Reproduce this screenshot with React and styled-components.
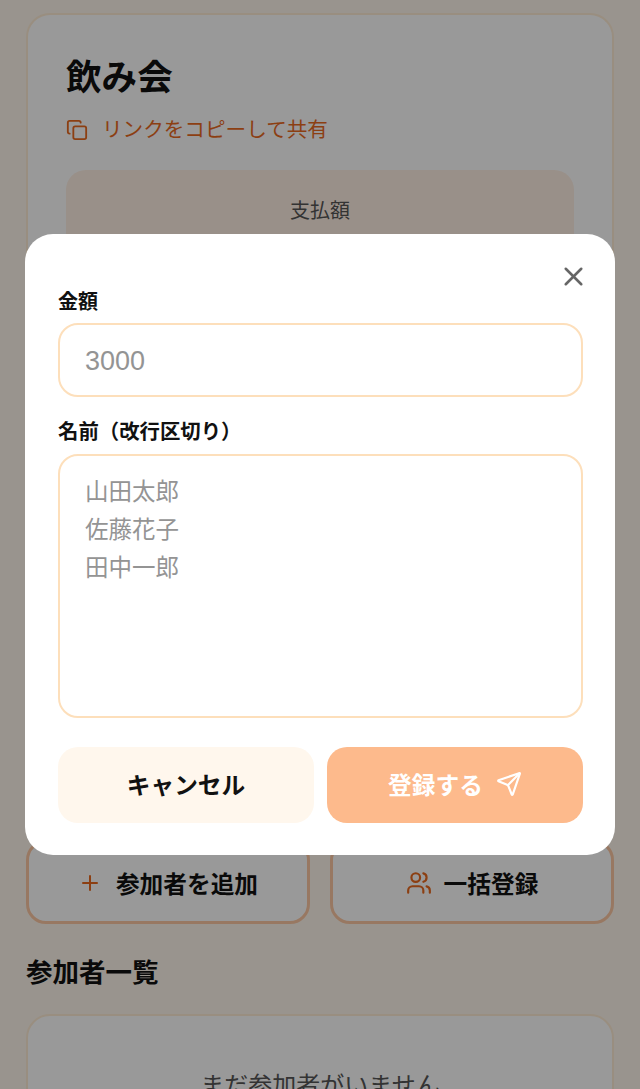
import React from "react";
import styled, { createGlobalStyle } from "styled-components";
import { Copy, Plus, Users, X, Send } from "lucide-react";

const Global = createGlobalStyle`
  html, body { margin: 0; padding: 0; height: 100%; overflow: hidden; background: #fff7ed; }
  * { box-sizing: border-box; }
  body { font-family: "Liberation Sans", "Noto Sans CJK JP", sans-serif; color: #111; }
  button, input, textarea { font-family: inherit; }
`;

const Page = styled.div`
  height: 1089px;
  overflow: hidden;
  padding: 13px 26px 0;
  background: #fff7ed;
  display: flex;
  flex-direction: column;
`;
const EventCard = styled.section`
  flex: none;
  height: 500px;
  background: #fff;
  border: 2px solid #ffedd5;
  border-bottom: 0;
  border-radius: 24px 24px 0 0;
  padding: 38px 38px 0;
`;
const Title = styled.h1`
  margin: 0;
  font-size: 35.6px;
  line-height: 50px;
  font-weight: 700;
  color: #111;
`;
const ShareLink = styled.a`
  margin-top: 12px;
  display: flex;
  align-items: center;
  gap: 14px;
  font-size: 20.6px;
  line-height: 30px;
  color: #ea6a1f;
`;
const PayBox = styled.div`
  margin-top: 25px;
  height: 260px;
  border-radius: 20px;
  background: #fff0e4;
  padding-top: 27px;
  text-align: center;
  font-size: 20px;
  line-height: 28px;
  color: #555;
`;
const ActionRow = styled.div`
  margin-top: 327px;
  flex: none;
  display: grid;
  grid-template-columns: 284px 284px;
  gap: 20px;
`;
const ActionButton = styled.button`
  height: 84px;
  border: 3px solid #fdc9a4;
  border-radius: 20px;
  background: #fff;
  display: flex;
  align-items: center;
  justify-content: center;
  gap: ${p => p.$gap || 14}px;
  font-size: 23.7px;
  font-weight: 700;
  color: #111;
  padding: 2px 0 0;
  svg { color: #ea6a1f; }
`;
const SectionTitle = styled.h2`
  margin: 29px 0 0;
  font-size: 26.5px;
  line-height: 40px;
  font-weight: 700;
  color: #111;
`;
const ListCard = styled.section`
  margin-top: 21px;
  flex: none;
  height: 200px;
  background: #fff;
  border: 2px solid #ffedd5;
  border-radius: 24px;
  padding-top: 54px;
  text-align: center;
  font-size: 24px;
  line-height: 32px;
  color: #555;
`;
const Overlay = styled.div`
  position: fixed;
  inset: 0;
  background: rgba(0, 0, 0, 0.4);
  display: flex;
  align-items: center;
  justify-content: center;
`;
const Modal = styled.div`
  position: relative;
  width: 590px;
  height: 621px;
  background: #fff;
  border-radius: 28px;
  padding: 56px 32px 0 33px;
  display: flex;
  flex-direction: column;
`;
const CloseButton = styled.button`
  position: absolute;
  top: 26px;
  right: 26px;
  width: 32px;
  height: 32px;
  padding: 0;
  border: 0;
  background: none;
  color: #666;
  display: flex;
  align-items: center;
  justify-content: center;
`;
const Label = styled.label`
  display: block;
  font-size: ${p => p.$size || 20}px;
  line-height: 24px;
  font-weight: 700;
  color: #111;
  margin-top: ${p => p.$top || 0}px;
`;
const AmountInput = styled.input`
  display: block;
  margin-top: 9px;
  width: 100%;
  height: 74px;
  border: 2px solid #fddfbb;
  border-radius: 20px;
  padding: 2px 25px 0;
  font-size: 27px;
  outline: none;
  background: #fff;
  &::placeholder { color: #949494; opacity: 1; }
`;
const NamesInput = styled.textarea`
  display: block;
  margin-top: 10px;
  width: 100%;
  height: 264px;
  border: 2px solid #fddfbb;
  border-radius: 20px;
  padding: 17px 25px;
  font-size: 23.5px;
  line-height: 38px;
  resize: none;
  outline: none;
  background: #fff;
  &::placeholder { color: #949494; opacity: 1; }
`;
const ModalActions = styled.div`
  margin-top: 29px;
  display: grid;
  grid-template-columns: 256px 256px;
  gap: 13px;
`;
const ModalButton = styled.button`
  height: 76px;
  border: 0;
  border-radius: 20px;
  padding: 0 0 3px;
  display: flex;
  align-items: center;
  justify-content: center;
  gap: 13px;
  font-size: 23.7px;
  font-weight: 700;
  background: ${p => (p.$primary ? "#fdba8c" : "#fff7ed")};
  color: ${p => (p.$primary ? "#fff" : "#111")};
`;

export default function App() {
  return (
    <>
      <Global />
      <Page>
        <EventCard>
          <Title>飲み会</Title>
          <ShareLink>
            <Copy size={22} strokeWidth={2} />
            リンクをコピーして共有
          </ShareLink>
          <PayBox>支払額</PayBox>
        </EventCard>
        <ActionRow>
          <ActionButton><Plus size={24} strokeWidth={2} />参加者を追加</ActionButton>
          <ActionButton $gap={12}><Users size={26} strokeWidth={2} />一括登録</ActionButton>
        </ActionRow>
        <SectionTitle>参加者一覧</SectionTitle>
        <ListCard>まだ参加者がいません</ListCard>
      </Page>
      <Overlay>
        <Modal>
          <CloseButton aria-label="閉じる"><X size={31} strokeWidth={2} /></CloseButton>
          <Label>金額</Label>
          <AmountInput placeholder="3000" />
          <Label $top={23} $size={20.4}>名前（改行区切り）</Label>
          <NamesInput placeholder={"山田太郎\n佐藤花子\n田中一郎"} />
          <ModalActions>
            <ModalButton>キャンセル</ModalButton>
            <ModalButton $primary>登録する<Send size={26} strokeWidth={2} /></ModalButton>
          </ModalActions>
        </Modal>
      </Overlay>
    </>
  );
}
